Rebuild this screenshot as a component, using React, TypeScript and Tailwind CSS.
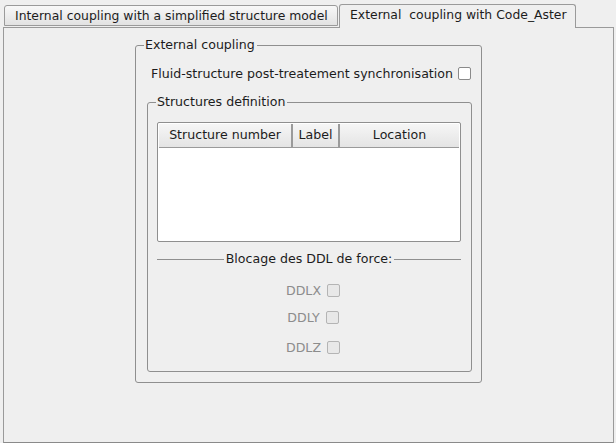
const font = { fontFamily: '"DejaVu Sans", "Liberation Sans", sans-serif' };

const Check = ({ disabled }: { disabled?: boolean }) => (
  <span
    className={`inline-block w-[13px] h-[13px] rounded-[2px] border ${
      disabled ? "border-[#b4b4b4] bg-[#e8e8e8]" : "border-[#8a8a8a] bg-white"
    }`}
  />
);

const GroupBox = ({
  title,
  className,
  children,
}: {
  title: string;
  className: string;
  children: React.ReactNode;
}) => (
  <div className={`relative border border-[#8f8f8f] rounded-[3px] ${className}`}>
    <span className="absolute -top-[9px] left-[8px] bg-[#efefef] pl-[1px] pr-[2px] leading-[16px] text-[#1c1c1c]">
      {title}
    </span>
    {children}
  </div>
);

const App = () => {
  return (
    <div
      className="w-[616px] h-[443px] bg-[#efefef] overflow-hidden flex flex-col text-[12.6px] text-[#1c1c1c]"
      style={font}
    >
      {/* tabs */}
      <div className="flex items-end pl-[4px] h-[27px] relative z-10 text-[12.4px]">
        <div className="w-[334px] h-[21px] mb-[1px] border border-[#9a9a9a] rounded-t-[3px] bg-gradient-to-b from-[#f8f8f8] to-[#e2e2e2] pl-[10px] leading-[19px] whitespace-nowrap">
          Internal coupling with a simplified structure model
        </div>
        <div className="ml-[1px] w-[237px] h-[24px] -mb-[1px] border border-b-0 border-[#9a9a9a] rounded-t-[3px] bg-[#efefef] pl-[10px] leading-[20px] whitespace-pre">
          External  coupling with Code_Aster
        </div>
      </div>

      {/* panel */}
      <div className="ml-[3px] w-[611px] flex-1 border border-[#9a9a9a] border-b-[#8a8a8a]">
        <GroupBox title="External coupling" className="ml-[131px] mt-[17px] w-[347px] h-[338px]">
          <div className="mt-[21px] h-[13px] flex items-center justify-end gap-[5px] pr-[10px]">
            <span className="leading-[15px]">Fluid-structure post-treatement synchronisation</span>
            <Check />
          </div>

          <GroupBox title="Structures definition" className="ml-[11px] mt-[22px] w-[325px] h-[270px]">
            <div className="ml-[9px] mt-[19px] w-[304px] h-[120px] border border-[#8f8f8f] rounded-[2px] bg-white p-[1px]">
              <div className="flex h-[24px] border-b border-[#9a9a9a] bg-gradient-to-b from-[#f6f6f6] to-[#e4e4e4]">
                <div className="w-[134px] border-r-2 border-[#9a9a9a] flex items-center justify-center">
                  Structure number
                </div>
                <div className="w-[47px] border-r-2 border-[#9a9a9a] flex items-center justify-center">
                  Label
                </div>
                <div className="flex-1 flex items-center justify-center">Location</div>
              </div>
            </div>

            <div className="ml-[9px] mr-[10px] mt-[9px] h-[16px] flex items-center gap-[1px]">
              <div className="flex-1 h-px bg-[#8f8f8f]" />
              <span className="px-[1px] leading-[16px]">Blocage des DDL de force:</span>
              <div className="flex-1 h-px bg-[#8f8f8f]" />
            </div>

            <div className="flex flex-col items-center gap-[14px] mt-[17px] pl-[7px] text-[#8c8c8c]">
              {["DDLX", "DDLY", "DDLZ"].map((d, i) => (
                <div
                  key={d}
                  className={`h-[13px] flex items-center gap-[6px] ${i === 2 ? "mt-[3px]" : ""}`}
                >
                  <span className="leading-[15px]">{d}</span>
                  <Check disabled />
                </div>
              ))}
            </div>
          </GroupBox>
        </GroupBox>
      </div>
    </div>
  );
};

export default App;
